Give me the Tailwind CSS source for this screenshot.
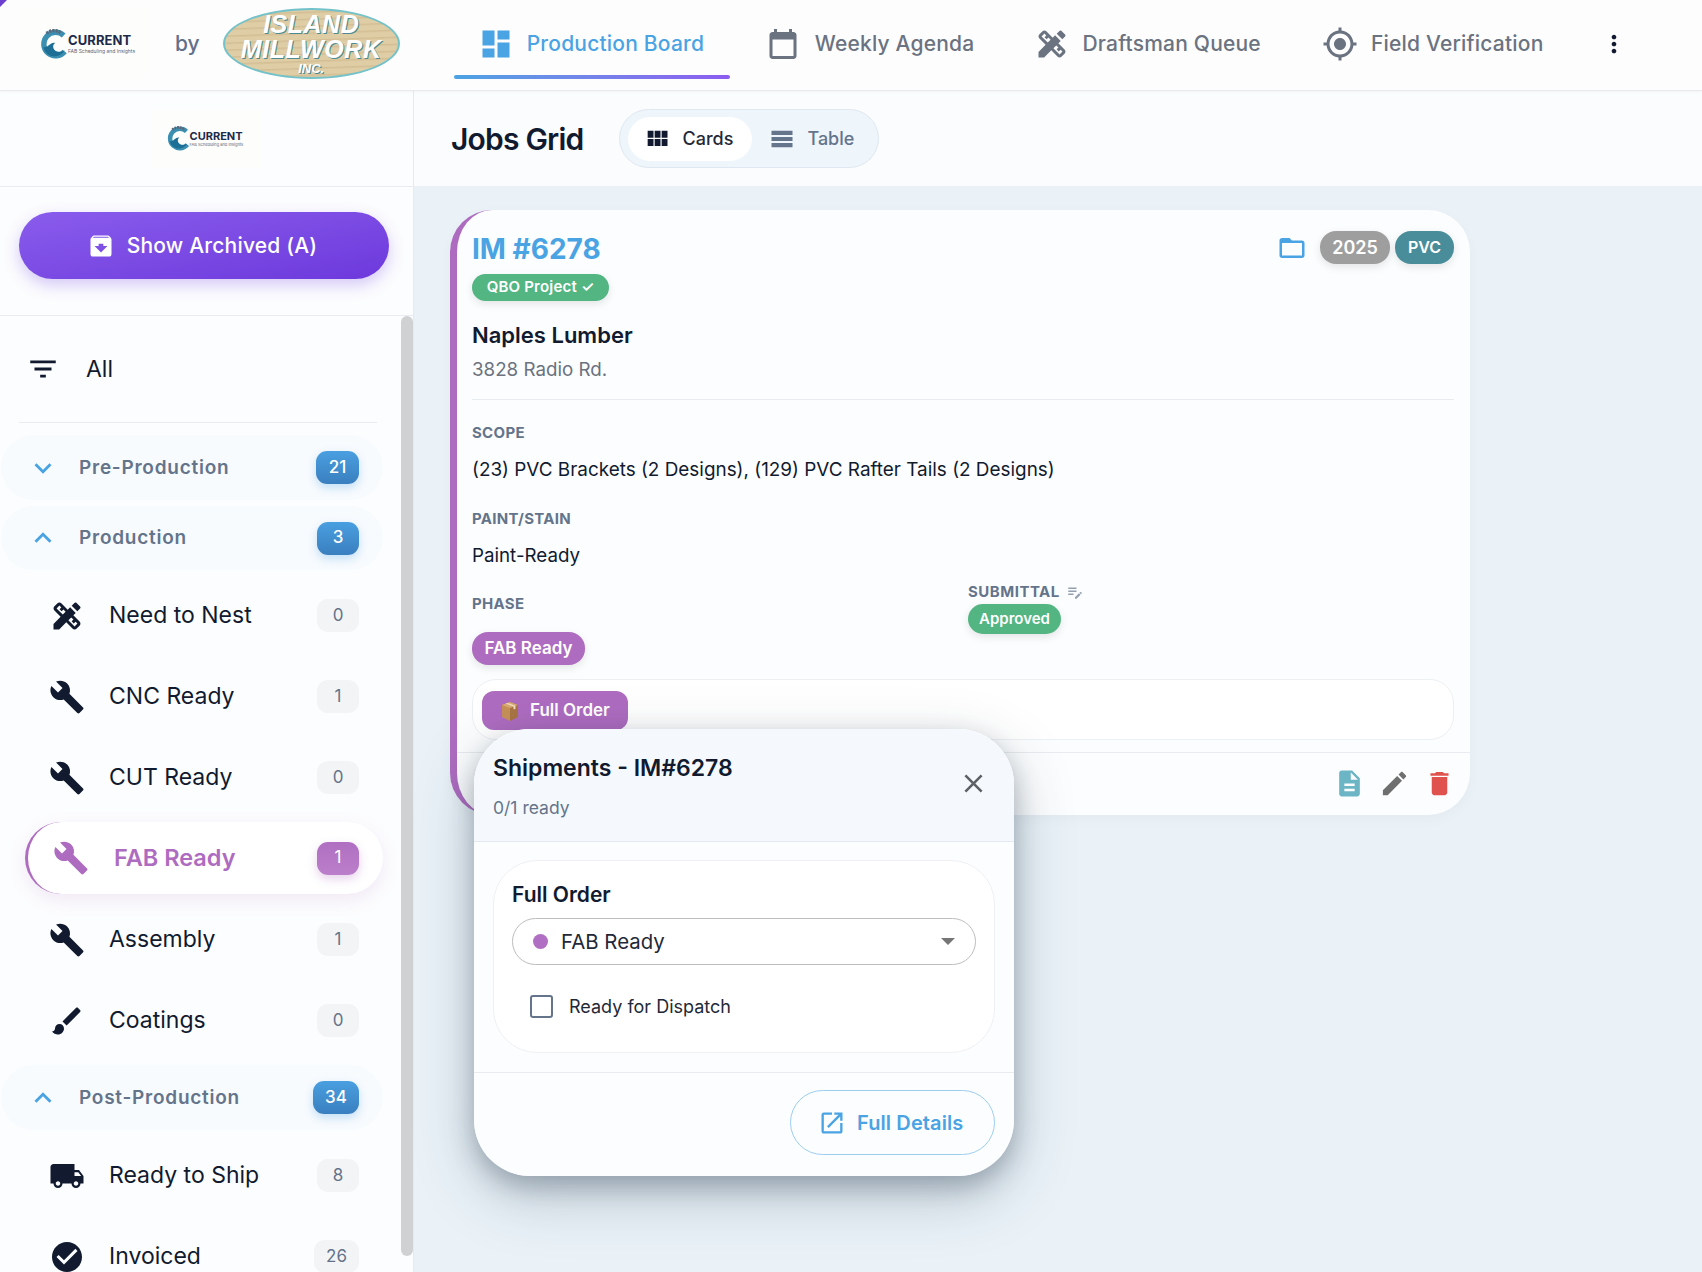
<!DOCTYPE html>
<html lang="en">
<head>
  <meta charset="UTF-8">
  <title>Current - Production Board</title>
  <script src="https://cdn.jsdelivr.net/npm/@tailwindcss/browser@4"></script>
</head>
<body class="font-['Inter',sans-serif] text-[#111a2e] bg-[#eaf2f8]">
<div class="relative w-[1702px] h-[1272px] overflow-hidden flex flex-col">

  <!-- corner tick -->
  <div class="absolute left-0 top-0 w-0 h-0 border-t-[7px] border-r-[7px] border-t-[#6d3fd0] border-r-transparent z-30"></div>

  <!-- Header -->
  <header class="h-[91px] shrink-0 flex items-center pb-[3px] bg-[#fdfdfe] border-b border-[#e8eaee] shadow-[0_1px_3px_rgba(0,0,0,0.04)] z-10">
    <div class="ml-[20px] w-[130px] h-[71px] bg-[#fdfdfb] flex items-center pl-[20px]">
      <svg class="w-[28px] h-[30px]" viewBox="0 0 26 28"><path d="M22 6a11 11 0 1 0 1 15" fill="none" stroke="#3b8fb0" stroke-width="5"/><path d="M3 17c5 1 6-5 11-4-3 2-2 7 2 8 2 .5 5 0 7-1-3 5-10 7-15 4-3-2-4-4-5-7z" fill="#1d6f95"/><path d="M6 4a11 11 0 0 1 14 0" fill="none" stroke="#5c6678" stroke-width="3" stroke-dasharray="2 1"/></svg>
      <div class="flex flex-col leading-none">
        <span class="text-[13px] font-bold text-[#1d2a4a] tracking-[0.1px]">CURRENT</span>
        <span class="text-[5px] text-[#5c6678] mt-[2px] whitespace-nowrap">FAB Scheduling and Insights</span>
      </div>
    </div>
    <span class="ml-[25px] text-[21px] font-medium text-[#64708a]">by</span>
    <div class="ml-[23px] w-[177px] h-[71px] rounded-[50%] border-2 border-[#74c2c9] bg-[repeating-linear-gradient(178deg,#dfcda6_0px,#dfcda6_4px,#d3be94_5px,#dfcda6_7px)] flex flex-col items-center justify-center italic font-black text-white leading-none font-['Liberation_Sans',sans-serif] [text-shadow:1px_1px_0_#4d8a93]">
      <span class="text-[25px] tracking-[0.5px]">ISLAND</span>
      <span class="text-[25px] tracking-[0.6px]">MILLWORK</span>
      <span class="text-[13px]">INC.</span>
    </div>

    <nav class="flex items-center ml-[54px] h-full text-[21px] font-medium text-[#6b7280] tracking-[0.2px]">
      <div class="relative w-[276px] h-full flex items-center pl-[24px]">
        <svg class="w-[36px] h-[36px] fill-[#4aa3e3]" viewBox="0 0 24 24"><path d="M3 13h8V3H3v10zm0 8h8v-6H3v6zm10 0h8V11h-8v10zm0-18v6h8V3h-8z"/></svg>
        <span class="ml-[13px] text-[#4aa3e3]">Production Board</span>
        <div class="absolute left-0 right-0 top-[75px] h-[4px] rounded-full bg-gradient-to-r from-[#4aa3e3] to-[#8b5cf0]"></div>
      </div>
      <div class="flex items-center ml-[35px]">
        <svg class="w-[36px] h-[36px] fill-[#6b7280]" viewBox="0 0 24 24"><path d="M19 4h-1V2h-2v2H8V2H6v2H5c-1.1 0-2 .9-2 2v14c0 1.1.9 2 2 2h14c1.1 0 2-.9 2-2V6c0-1.1-.9-2-2-2zm0 16H5V9h14v11z"/></svg>
        <span class="ml-[14px]">Weekly Agenda</span>
      </div>
      <div class="flex items-center ml-[60px]">
        <svg class="w-[36px] h-[36px] fill-[#6b7280]" viewBox="0 0 24 24"><path d="M16.24 11.51l1.57-1.57-3.75-3.75-1.57 1.57L8.35 3.63c-.78-.78-2.05-.78-2.83 0l-1.9 1.9c-.78.78-.78 2.05 0 2.83l4.13 4.13L3 17.25V21h3.75l4.76-4.76 4.13 4.13c.95.95 2.23.6 2.83 0l1.9-1.9c.78-.78.78-2.05 0-2.83l-4.13-4.13zm-7.06-.44L5.04 6.94l1.89-1.9L8.2 6.31 7.02 7.5l1.41 1.41 1.19-1.19 1.45 1.45-1.89 1.9zm7.88 7.89l-4.13-4.14 1.9-1.9 1.45 1.45-1.19 1.19 1.41 1.41 1.19-1.19 1.27 1.27-1.9 1.91zM20.71 7.04c.39-.39.39-1.02 0-1.41l-2.34-2.34c-.47-.47-1.12-.29-1.41 0l-1.83 1.83 3.75 3.75 1.83-1.83z"/></svg>
        <span class="ml-[12px]">Draftsman Queue</span>
      </div>
      <div class="flex items-center ml-[61px]">
        <svg class="w-[36px] h-[36px] fill-[#6b7280]" viewBox="0 0 24 24"><path d="M12 8c-2.21 0-4 1.79-4 4s1.79 4 4 4 4-1.79 4-4-1.79-4-4-4zm8.94 3c-.46-4.17-3.77-7.48-7.94-7.94V1h-2v2.06C6.83 3.52 3.52 6.83 3.06 11H1v2h2.06c.46 4.17 3.77 7.48 7.94 7.94V23h2v-2.06c4.17-.46 7.48-3.77 7.94-7.94H23v-2h-2.06zM12 19c-3.87 0-7-3.13-7-7s3.13-7 7-7 7 3.13 7 7-3.13 7-7 7z"/></svg>
        <span class="ml-[13px]">Field Verification</span>
      </div>
      <svg class="w-[28px] h-[28px] fill-[#111a2e] ml-[57px]" viewBox="0 0 24 24"><path d="M12 8c1.1 0 2-.9 2-2s-.9-2-2-2-2 .9-2 2 .9 2 2 2zm0 2c-1.1 0-2 .9-2 2s.9 2 2 2 2-.9 2-2-.9-2-2-2zm0 6c-1.1 0-2 .9-2 2s.9 2 2 2 2-.9 2-2-.9-2-2-2z"/></svg>
    </nav>
  </header>

  <div class="flex flex-1 min-h-0">
    <!-- Sidebar -->
    <aside class="w-[414px] shrink-0 flex flex-col bg-[#fcfdfe] border-r border-[#e6e9ed]">
      <div class="h-[96px] shrink-0 flex items-center justify-center border-b border-[#e8ebef]">
        <div class="w-[110px] h-[58px] bg-[#fdfdfb] flex items-center pl-[15px]">
          <svg class="w-[23px] h-[25px]" viewBox="0 0 26 28"><path d="M22 6a11 11 0 1 0 1 15" fill="none" stroke="#3b8fb0" stroke-width="5"/><path d="M3 17c5 1 6-5 11-4-3 2-2 7 2 8 2 .5 5 0 7-1-3 5-10 7-15 4-3-2-4-4-5-7z" fill="#1d6f95"/><path d="M6 4a11 11 0 0 1 14 0" fill="none" stroke="#5c6678" stroke-width="3" stroke-dasharray="2 1"/></svg>
          <div class="flex flex-col leading-none">
            <span class="text-[11px] font-bold text-[#1d2a4a]">CURRENT</span>
            <span class="text-[4px] text-[#5c6678] mt-[1px] whitespace-nowrap">FAB Scheduling and Insights</span>
          </div>
        </div>
      </div>

      <div class="h-[129px] shrink-0 pl-[19px] pt-[25px] border-b border-[#e8ebef]">
        <div class="w-[370px] h-[67px] rounded-full flex items-center justify-center gap-[12px] bg-gradient-to-br from-[#8a5cec] to-[#6d38dc] text-white text-[21px] font-medium tracking-[0.2px] shadow-[0_6px_16px_rgba(124,77,230,0.3)]">
          <svg class="w-[28px] h-[28px] fill-white -ml-[4px]" viewBox="0 0 24 24"><path d="M20.54 5.23l-1.39-1.68C18.88 3.21 18.47 3 18 3H6c-.47 0-.88.21-1.16.55L3.46 5.23C3.17 5.57 3 6.02 3 6.5V19c0 1.1.9 2 2 2h14c1.1 0 2-.9 2-2V6.5c0-.48-.17-.93-.46-1.27zM12 17.5L6.5 12H10v-2h4v2h3.5L12 17.5zM5.12 5l.81-1h12l.94 1H5.12z"/></svg>
          <span>Show Archived (A)</span>
        </div>
      </div>

      <div class="flex-1 min-h-0 flex">
        <div class="w-[401px] shrink-0 overflow-hidden">
          <div class="h-[106px] flex items-center pl-[26px]">
            <svg class="w-[34px] h-[34px] fill-[#111a2e]" viewBox="0 0 24 24"><path d="M10 18h4v-2h-4v2zM3 6v2h18V6H3zm3 7h12v-2H6v2z"/></svg>
            <span class="ml-[26px] text-[23px] font-normal">All</span>
          </div>
          <div class="mx-[19px] w-[358px] border-t border-[#e8ebef]"></div>

          <!-- Pre-Production -->
          <div class="mt-[12px] ml-[1px] w-[382px] h-[65px] rounded-full bg-[#f8fbfe] flex items-center pr-[24px]">
            <svg class="ml-[25px] w-[34px] h-[34px] fill-[#4aa3e3]" viewBox="0 0 24 24"><path d="M16.59 8.59L12 13.17 7.41 8.59 6 10l6 6 6-6z"/></svg>
            <span class="ml-[19px] flex-1 pt-[1px] text-[19px] font-semibold text-[#64748b] tracking-[0.75px]">Pre-Production</span>
            <span class="w-[43px] h-[33px] rounded-[11px] bg-gradient-to-b from-[#4a9fe0] to-[#3a7fbf] text-white text-[17px] font-medium flex items-center justify-center shadow-[0_4px_10px_rgba(74,159,224,0.3)]">21</span>
          </div>

          <!-- Production -->
          <div class="mt-[6px] ml-[1px] w-[382px] h-[64px] rounded-full bg-[#f8fbfe] flex items-center pr-[24px]">
            <svg class="ml-[25px] w-[34px] h-[34px] fill-[#4aa3e3]" viewBox="0 0 24 24"><path d="M12 8l-6 6 1.41 1.41L12 10.83l4.59 4.58L18 14z"/></svg>
            <span class="ml-[19px] flex-1 pt-[1px] text-[19px] font-semibold text-[#64748b] tracking-[0.75px]">Production</span>
            <span class="w-[42px] h-[33px] rounded-[11px] bg-gradient-to-b from-[#4a9fe0] to-[#3a7fbf] text-white text-[17px] font-medium flex items-center justify-center shadow-[0_4px_10px_rgba(74,159,224,0.3)]">3</span>
          </div>

          <div class="mt-[5px] h-[81px] flex items-center pr-[42px]">
            <svg class="ml-[49px] w-[36px] h-[36px] fill-[#111a2e]" viewBox="0 0 24 24"><path d="M16.24 11.51l1.57-1.57-3.75-3.75-1.57 1.57L8.35 3.63c-.78-.78-2.05-.78-2.83 0l-1.9 1.9c-.78.78-.78 2.05 0 2.83l4.13 4.13L3 17.25V21h3.75l4.76-4.76 4.13 4.13c.95.95 2.23.6 2.83 0l1.9-1.9c.78-.78.78-2.05 0-2.83l-4.13-4.13zm-7.06-.44L5.04 6.94l1.89-1.9L8.2 6.31 7.02 7.5l1.41 1.41 1.19-1.19 1.45 1.45-1.89 1.9zm7.88 7.89l-4.13-4.14 1.9-1.9 1.45 1.45-1.19 1.19 1.41 1.41 1.19-1.19 1.27 1.27-1.9 1.91zM20.71 7.04c.39-.39.39-1.02 0-1.41l-2.34-2.34c-.47-.47-1.12-.29-1.41 0l-1.83 1.83 3.75 3.75 1.83-1.83z"/></svg>
            <span class="ml-[24px] flex-1 text-[23px]">Need to Nest</span>
            <span class="w-[42px] h-[33px] rounded-[11px] bg-[#f3f4f5] text-[#64748b] text-[17px] flex items-center justify-center">0</span>
          </div>
          <div class="h-[81px] flex items-center pr-[42px]">
            <svg class="ml-[49px] w-[36px] h-[36px] fill-[#111a2e]" viewBox="0 0 24 24"><path d="M22.7 19l-9.1-9.1c.9-2.3.4-5-1.5-6.9-2-2-5-2.4-7.4-1.3L9 6 6 9 1.6 4.7C.4 7.1.9 10.1 2.9 12.1c1.9 1.9 4.6 2.4 6.9 1.5l9.1 9.1c.4.4 1 .4 1.4 0l2.3-2.3c.5-.4.5-1.1.1-1.4z"/></svg>
            <span class="ml-[24px] flex-1 text-[23px]">CNC Ready</span>
            <span class="w-[42px] h-[33px] rounded-[11px] bg-[#f3f4f5] text-[#64748b] text-[17px] flex items-center justify-center">1</span>
          </div>
          <div class="h-[81px] flex items-center pr-[42px]">
            <svg class="ml-[49px] w-[36px] h-[36px] fill-[#111a2e]" viewBox="0 0 24 24"><path d="M22.7 19l-9.1-9.1c.9-2.3.4-5-1.5-6.9-2-2-5-2.4-7.4-1.3L9 6 6 9 1.6 4.7C.4 7.1.9 10.1 2.9 12.1c1.9 1.9 4.6 2.4 6.9 1.5l9.1 9.1c.4.4 1 .4 1.4 0l2.3-2.3c.5-.4.5-1.1.1-1.4z"/></svg>
            <span class="ml-[24px] flex-1 text-[23px]">CUT Ready</span>
            <span class="w-[42px] h-[33px] rounded-[11px] bg-[#f3f4f5] text-[#64748b] text-[17px] flex items-center justify-center">0</span>
          </div>

          <!-- active row -->
          <div class="mt-[4px] ml-[25px] w-[358px] h-[72px] rounded-full bg-white border-l-[3px] border-[#ae6cc0] shadow-[0_6px_18px_rgba(174,108,192,0.14)] flex items-center pr-[24px]">
            <svg class="ml-[25px] w-[36px] h-[36px] fill-[#ae6cc0]" viewBox="0 0 24 24"><path d="M22.7 19l-9.1-9.1c.9-2.3.4-5-1.5-6.9-2-2-5-2.4-7.4-1.3L9 6 6 9 1.6 4.7C.4 7.1.9 10.1 2.9 12.1c1.9 1.9 4.6 2.4 6.9 1.5l9.1 9.1c.4.4 1 .4 1.4 0l2.3-2.3c.5-.4.5-1.1.1-1.4z"/></svg>
            <span class="ml-[25px] flex-1 text-[23.5px] font-semibold text-[#ae6cc0]">FAB Ready</span>
            <span class="w-[42px] h-[33px] rounded-[11px] bg-gradient-to-b from-[#b06fc2] to-[#bb7fca] text-white text-[17px] flex items-center justify-center shadow-[0_4px_10px_rgba(174,108,192,0.3)]">1</span>
          </div>

          <div class="mt-[5px] h-[81px] flex items-center pr-[42px]">
            <svg class="ml-[49px] w-[36px] h-[36px] fill-[#111a2e]" viewBox="0 0 24 24"><path d="M22.7 19l-9.1-9.1c.9-2.3.4-5-1.5-6.9-2-2-5-2.4-7.4-1.3L9 6 6 9 1.6 4.7C.4 7.1.9 10.1 2.9 12.1c1.9 1.9 4.6 2.4 6.9 1.5l9.1 9.1c.4.4 1 .4 1.4 0l2.3-2.3c.5-.4.5-1.1.1-1.4z"/></svg>
            <span class="ml-[24px] flex-1 text-[23px]">Assembly</span>
            <span class="w-[42px] h-[33px] rounded-[11px] bg-[#f3f4f5] text-[#64748b] text-[17px] flex items-center justify-center">1</span>
          </div>
          <div class="h-[81px] flex items-center pr-[42px]">
            <svg class="ml-[49px] w-[36px] h-[36px] fill-[#111a2e]" viewBox="0 0 24 24"><path d="M7 14c-1.66 0-3 1.34-3 3 0 1.31-1.16 2-2 2 .92 1.22 2.49 2 4 2 2.21 0 4-1.79 4-4 0-1.66-1.34-3-3-3zm13.71-9.37l-1.34-1.34c-.39-.39-1.02-.39-1.41 0L9 12.25 11.75 15l8.96-8.96c.39-.39.39-1.02 0-1.41z"/></svg>
            <span class="ml-[24px] flex-1 text-[23px]">Coatings</span>
            <span class="w-[42px] h-[33px] rounded-[11px] bg-[#f3f4f5] text-[#64748b] text-[17px] flex items-center justify-center">0</span>
          </div>

          <!-- Post-Production -->
          <div class="mt-[4px] ml-[1px] w-[382px] h-[65px] rounded-full bg-[#f8fbfe] flex items-center pr-[24px]">
            <svg class="ml-[25px] w-[34px] h-[34px] fill-[#4aa3e3]" viewBox="0 0 24 24"><path d="M12 8l-6 6 1.41 1.41L12 10.83l4.59 4.58L18 14z"/></svg>
            <span class="ml-[19px] flex-1 pt-[1px] text-[19px] font-semibold text-[#64748b] tracking-[0.75px]">Post-Production</span>
            <span class="w-[46px] h-[33px] rounded-[11px] bg-gradient-to-b from-[#4a9fe0] to-[#3a7fbf] text-white text-[17px] font-medium flex items-center justify-center shadow-[0_4px_10px_rgba(74,159,224,0.3)]">34</span>
          </div>

          <div class="mt-[5px] h-[81px] flex items-center pr-[42px]">
            <svg class="ml-[49px] w-[36px] h-[36px] fill-[#111a2e]" viewBox="0 0 24 24"><path d="M20 8h-3V4H3c-1.1 0-2 .9-2 2v11h2c0 1.66 1.34 3 3 3s3-1.34 3-3h6c0 1.66 1.34 3 3 3s3-1.34 3-3h2v-5l-3-4zM6 18.5c-.83 0-1.5-.67-1.5-1.5s.67-1.5 1.5-1.5 1.5.67 1.5 1.5-.67 1.5-1.5 1.5zm13.5-9l1.96 2.5H17V9.5h2.5zm-1.5 9c-.83 0-1.5-.67-1.5-1.5s.67-1.5 1.5-1.5 1.5.67 1.5 1.5-.67 1.5-1.5 1.5z"/></svg>
            <span class="ml-[24px] flex-1 text-[23px]">Ready to Ship</span>
            <span class="w-[42px] h-[33px] rounded-[11px] bg-[#f3f4f5] text-[#64748b] text-[17px] flex items-center justify-center">8</span>
          </div>
          <div class="h-[81px] flex items-center pr-[42px]">
            <svg class="ml-[49px] w-[36px] h-[36px] fill-[#111a2e]" viewBox="0 0 24 24"><path d="M12 2C6.48 2 2 6.48 2 12s4.48 10 10 10 10-4.48 10-10S17.52 2 12 2zm-2 15l-5-5 1.41-1.41L10 14.17l7.59-7.59L19 8l-9 9z"/></svg>
            <span class="ml-[24px] flex-1 text-[23px]">Invoiced</span>
            <span class="w-[45px] h-[33px] rounded-[11px] bg-[#f3f4f5] text-[#64748b] text-[17px] flex items-center justify-center">26</span>
          </div>
        </div>
        <!-- scrollbar -->
        <div class="w-[12px] h-[940px] rounded-full bg-[#d0d1d3]"></div>
      </div>
    </aside>

    <!-- Main -->
    <main class="flex-1 min-w-0 flex flex-col">
      <div class="h-[96px] shrink-0 bg-[#fbfcfe] flex items-center pl-[37px] border-b border-[#eef1f4]">
        <h1 class="text-[30px] font-semibold tracking-[-0.8px] pt-[1px]">Jobs Grid</h1>
        <div class="ml-[36px] w-[260px] h-[59px] rounded-full bg-[#eef5fb] border border-[#dfe8f0] flex items-center pl-[8px]">
          <div class="w-[124px] h-[44px] rounded-full bg-white flex items-center pl-[15px] text-[18px] font-medium text-[#1f2937]">
            <svg class="w-[28px] h-[28px] fill-[#111a2e]" viewBox="0 0 24 24"><path d="M4 11h5V5H4v6zm0 7h5v-6H4v6zm6 0h5v-6h-5v6zm6 0h5v-6h-5v6zm-6-7h5V5h-5v6zm6-6v6h5V5h-5z"/></svg>
            <span class="ml-[11px]">Cards</span>
          </div>
          <div class="flex items-center pl-[16px] text-[18px] font-medium text-[#64748b]">
            <svg class="w-[28px] h-[28px] fill-[#64748b]" viewBox="0 0 24 24"><path d="M3 5h18v3.6H3zM3 10.2h18v3.6H3zM3 15.4h18V19H3z"/></svg>
            <span class="ml-[11px]">Table</span>
          </div>
        </div>
      </div>

      <!-- Job card -->
      <article class="mt-[23px] ml-[36px] w-[1020px] h-[605px] rounded-[42px] bg-[#fcfdfe] border-l-[7px] border-[#ae6cc0] pl-[15px] pt-[21px] shadow-[0_4px_14px_rgba(0,0,0,0.03)]">
        <div class="flex items-start justify-between pr-[16px]">
          <div class="text-[28px] leading-[36px] h-[34px] font-bold text-[#4aa3e3]">IM #6278</div>
          <div class="flex items-center">
            <svg class="w-[30px] h-[30px] fill-[#4aa3e3] mr-[13px]" viewBox="0 0 24 24"><path d="M20 6h-8l-2-2H4c-1.1 0-1.99.9-1.99 2L2 18c0 1.1.9 2 2 2h16c1.1 0 2-.9 2-2V8c0-1.1-.9-2-2-2zm0 12H4V8h16v10z"/></svg>
            <span class="w-[70px] h-[33px] rounded-[16px] bg-[#9e9e9e] text-white text-[18px] font-semibold flex items-center justify-center shadow-[0_3px_8px_rgba(0,0,0,0.1)]">2025</span>
            <span class="ml-[5px] w-[59px] h-[33px] rounded-[16px] bg-[#4a8d9a] text-white text-[16px] font-semibold flex items-center justify-center pb-[2px] shadow-[0_3px_8px_rgba(0,0,0,0.1)]">PVC</span>
          </div>
        </div>
        <div class="mt-[9px] w-[137px] h-[27px] rounded-full bg-[#52b582] text-white text-[15px] font-semibold tracking-[0.2px] flex items-center justify-center shadow-[0_3px_8px_rgba(0,0,0,0.1)]">QBO Project ✓</div>
        <div class="mt-[19px] h-[30px] text-[22px] font-semibold leading-[30px]">Naples Lumber</div>
        <div class="mt-[6px] h-[28px] text-[18.75px] leading-[28px] text-[#6b7280]">3828 Radio Rd.</div>
        <div class="mt-[15px] mr-[16px] border-t border-[#e8ebef]"></div>

        <div class="mt-[23px] h-[20px] text-[15px] leading-[20px] font-bold text-[#64748b] tracking-[0.3px]">SCOPE</div>
        <div class="mt-[13px] h-[28px] text-[18.9px] leading-[28px]">(23) PVC Brackets (2 Designs), (129) PVC Rafter Tails (2 Designs)</div>
        <div class="mt-[25px] h-[20px] text-[15px] leading-[20px] font-bold text-[#64748b] tracking-[0.3px]">PAINT/STAIN</div>
        <div class="mt-[13px] h-[28px] text-[18.75px] leading-[28px]">Paint-Ready</div>

        <div class="flex h-[95px]">
          <div class="w-[496px] pt-[24px]">
            <div class="h-[20px] text-[15px] leading-[20px] font-bold text-[#64748b] tracking-[0.3px]">PHASE</div>
            <div class="mt-[18px] w-[113px] h-[33px] rounded-[16px] bg-[#ae6cc0] text-white text-[17px] font-semibold flex items-center justify-center shadow-[0_3px_8px_rgba(0,0,0,0.1)]">FAB Ready</div>
          </div>
          <div class="pt-[12px]">
            <div class="h-[20px] flex items-center text-[15px] font-bold text-[#64748b] tracking-[0.5px]">
              SUBMITTAL
              <svg class="ml-[6px] w-[18px] h-[18px] fill-[#94a0b0]" viewBox="0 0 24 24"><path d="M3 10h11v2H3v-2zm0-2h11V6H3v2zm0 8h7v-2H3v2zm15.01-3.13l.71-.71c.39-.39 1.02-.39 1.41 0l.71.71c.39.39.39 1.02 0 1.41l-.71.71-2.12-2.12zm-.71.71l-5.3 5.3V21h2.12l5.3-5.3-2.12-2.12z"/></svg>
            </div>
            <div class="mt-[2px] w-[93px] h-[30px] rounded-full bg-[#52b582] text-white text-[15px] font-semibold flex items-center justify-center shadow-[0_3px_8px_rgba(0,0,0,0.1)]">Approved</div>
          </div>
        </div>

        <div class="mt-[14px] mr-[16px] h-[61px] rounded-[24px] bg-white border border-[#edf0f3] pl-[9px] pt-[11px]">
          <div class="w-[146px] h-[39px] rounded-[12px] bg-[#ae6cc0] text-white text-[17px] font-semibold flex items-center pl-[18px]">
            <svg class="w-[20px] h-[22px] mr-[10px]" viewBox="0 0 20 22"><path d="M10 2l8 3v12l-8 4z" fill="#a87444"/><path d="M10 2L2 5v12l8 4z" fill="#c79058"/><path d="M2 5l8 3 8-3-8-3z" fill="#d9aa72"/><path d="M5.5 3.6l8 3v3l2-.8v-3l-8-2.9z" fill="#f0dcc0"/></svg>
            Full Order
          </div>
        </div>
        <div class="mt-[12px] -ml-[15px] border-t border-[#e8ebef]"></div>
        <div class="flex justify-end gap-[14px] pr-[15px] pt-[15px]">
          <svg class="w-[31px] h-[31px] fill-[#6bb5c5]" viewBox="0 0 24 24"><path d="M14 2H6c-1.1 0-1.99.9-1.99 2L4 20c0 1.1.89 2 1.99 2H18c1.1 0 2-.9 2-2V8l-6-6zm2 16H8v-2h8v2zm0-4H8v-2h8v2zm-3-5V3.5L18.5 9H13z"/></svg>
          <svg class="w-[31px] h-[31px] fill-[#6f6f6f]" viewBox="0 0 24 24"><path d="M3 17.25V21h3.75L17.81 9.94l-3.75-3.75L3 17.25zM20.71 7.04c.39-.39.39-1.02 0-1.41l-2.34-2.34c-.39-.39-1.02-.39-1.41 0l-1.83 1.83 3.75 3.75 1.83-1.83z"/></svg>
          <svg class="w-[31px] h-[31px] fill-[#e0524e]" viewBox="0 0 24 24"><path d="M6 19c0 1.1.9 2 2 2h8c1.1 0 2-.9 2-2V7H6v12zM19 4h-3.5l-1-1h-5l-1 1H5v2h14V4z"/></svg>
        </div>
      </article>
    </main>
  </div>

  <!-- Shipments popover -->
  <section class="absolute left-[474px] top-[729px] w-[540px] h-[447px] rounded-[56px] bg-[#fcfdfe] overflow-hidden flex flex-col z-20">
    <div class="h-[113px] shrink-0 bg-[#f5f9fd] border-b border-[#e4eaf0] pl-[19px] pt-[23px] relative">
      <div class="text-[23px] leading-[32px] font-semibold">Shipments - IM#6278</div>
      <div class="mt-[12px] text-[17.5px] leading-[24px] text-[#64748b]">0/1 ready</div>
      <svg class="absolute left-[484px] top-[39px] w-[31px] h-[31px] fill-[#5f6368]" viewBox="0 0 24 24"><path d="M19 6.41L17.59 5 12 10.59 6.41 5 5 6.41 10.59 12 5 17.59 6.41 19 12 13.41 17.59 19 19 17.59 13.41 12z"/></svg>
    </div>
    <div class="mt-[18px] mx-[19px] h-[193px] shrink-0 rounded-[44px] bg-white border border-[#eef0f3] pl-[18px] pr-[18px] pt-[21px]">
      <div class="text-[21px] leading-[26px] font-semibold">Full Order</div>
      <div class="mt-[10px] h-[47px] rounded-full border border-[#bdbdbd] flex items-center pl-[20px] pr-[20px]">
        <span class="w-[15px] h-[15px] rounded-full bg-[#b06fc2]"></span>
        <span class="ml-[13px] flex-1 text-[20.4px] text-[#1f2937] pt-[2px]">FAB Ready</span>
        <span class="w-0 h-0 border-x-[7px] border-t-[7px] border-x-transparent border-t-[#757575]"></span>
      </div>
      <div class="mt-[28px] flex items-center pl-[18px]">
        <span class="w-[23px] h-[23px] rounded-[3px] border-[2.5px] border-[#64748b]"></span>
        <span class="ml-[16px] text-[18px] text-[#1f2937]">Ready for Dispatch</span>
      </div>
    </div>
    <div class="mt-[19px] border-t border-[#e8ebef] pt-[17px] flex justify-end pr-[19px]">
      <div class="w-[205px] h-[65px] rounded-full border border-[#9ccdf0] flex items-center pl-[27px] text-[20px] font-semibold text-[#4aa3e3] tracking-[0.1px]">
        <svg class="w-[28px] h-[28px] fill-[#4aa3e3]" viewBox="0 0 24 24"><path d="M19 19H5V5h7V3H5c-1.11 0-2 .9-2 2v14c0 1.1.89 2 2 2h14c1.1 0 2-.9 2-2v-7h-2v7zM14 3v2h3.59l-9.83 9.83 1.41 1.41L19 6.41V10h2V3h-7z"/></svg>
        <span class="ml-[11px]">Full Details</span>
      </div>
    </div>
  </section>
  <div class="absolute left-[474px] top-[729px] w-[540px] h-[447px] rounded-[56px] shadow-[0_10px_24px_rgba(30,50,70,0.28),0_20px_60px_rgba(30,50,70,0.25)] z-[19]"></div>
</div>
</body>
</html>
